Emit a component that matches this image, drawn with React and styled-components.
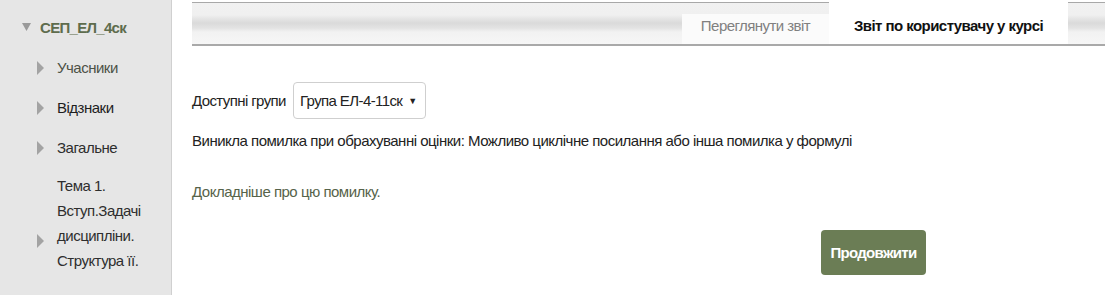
import React from 'react';
import styled, { createGlobalStyle } from 'styled-components';

const Global = createGlobalStyle`
  html, body { margin: 0; padding: 0; background: #fff; }
  body { font-family: "Liberation Sans", Arial, sans-serif; overflow: hidden; }
`;

const Page = styled.div`
  display: flex;
  width: 1105px;
  height: 295px;
  overflow: hidden;
`;

const Sidebar = styled.nav`
  flex: none;
  width: 172px;
  box-sizing: border-box;
  background: #e6e6e6;
  border-right: 1px solid #d0d0d0;
  padding-top: 17px;
`;

const CourseRow = styled.div`
  display: flex;
  align-items: center;
  height: 20px;
  padding-left: 22px;
  gap: 9px;
  font-size: 15px;
  font-weight: bold;
  letter-spacing: -0.7px;
  color: #5e6c4d;
`;

const ItemList = styled.ul`
  list-style: none;
  margin: 11px 0 0;
  padding: 0;
`;

const Item = styled.li`
  display: flex;
  align-items: ${p => (p.$multi ? 'flex-start' : 'center')};
  min-height: 40px;
  padding-left: 37px;
  padding-right: 8px;
  margin-top: ${p => (p.$multi ? '5px' : '0')};
  font-size: 15px;
  letter-spacing: -0.5px;
  line-height: ${p => (p.$multi ? '25px' : '20px')};
  color: ${p => p.$color || '#333'};
`;

const ArrowBox = styled.span`
  flex: none;
  display: flex;
  width: 7px;
  margin-right: 13px;
  margin-top: ${p => p.$offset || 0}px;
`;

const ItemText = styled.span`
  flex: 1;
`;

const Main = styled.main`
  flex: 1;
  min-width: 0;
  padding-left: 20px;
  display: flex;
  flex-direction: column;
`;

const TabBar = styled.div`
  display: flex;
  justify-content: flex-end;
  align-items: flex-end;
  height: 44px;
  padding-right: 37px;
  border-bottom: 2px solid #a9a9a9;
  background: linear-gradient(
    to bottom,
    #fff 0px,
    #fff 2px,
    #a8a8a8 2px,
    #a8a8a8 3px,
    #f1f1f1 3px,
    #f0f0f0 15px,
    #e4e4e4 19px,
    #dadada 23px,
    #e3e3e3 28px,
    #f2f2f2 32px,
    #f6f6f6 44px
  );
`;

const Tab = styled.div`
  display: flex;
  align-items: flex-end;
  justify-content: center;
  box-sizing: border-box;
  width: ${p => p.$width}px;
  height: ${p => (p.$active ? 44 : 30)}px;
  padding-bottom: 9px;
  background: ${p => (p.$active ? '#fff' : '#fbfbfb')};
  font-size: 15px;
  letter-spacing: -0.55px;
  line-height: 18px;
  font-weight: ${p => (p.$active ? 'bold' : 'normal')};
  color: ${p => (p.$active ? '#111' : '#808080')};
`;

const GroupRow = styled.div`
  display: flex;
  align-items: center;
  gap: 7px;
  margin-top: 36px;
  font-size: 15px;
  letter-spacing: -0.6px;
  color: #222;
`;

const SelectBox = styled.div`
  display: flex;
  align-items: center;
  gap: 6px;
  box-sizing: border-box;
  height: 37px;
  padding: 0 8px 0 6px;
  border: 1px solid #cfcfcf;
  border-radius: 4px;
  background: #fff;
  color: #222;
`;

const Caret = styled.span`
  font-size: 9px;
  letter-spacing: 0;
  color: #222;
`;

const ErrorText = styled.p`
  margin: 12px 0 0;
  font-size: 15px;
  line-height: 20px;
  letter-spacing: -0.5px;
  color: #222;
`;

const MoreLink = styled.a`
  display: block;
  margin-top: 31px;
  font-size: 15px;
  line-height: 20px;
  letter-spacing: -0.5px;
  color: #56634a;
  text-decoration: none;
`;

const ButtonRow = styled.div`
  display: flex;
  margin-top: 28px;
  padding-left: 629px;
`;

const Button = styled.button`
  width: 105px;
  height: 45px;
  border: none;
  border-radius: 4px;
  background: #6b7d55;
  color: #fff;
  font-family: inherit;
  font-size: 15px;
  font-weight: bold;
  letter-spacing: -0.7px;
  cursor: pointer;
`;

const DownTriangle = () => (
  <svg width="9" height="8" viewBox="0 0 9 8">
    <path d="M0 0 H9 L4.5 8 Z" fill="#9a9a9a" />
  </svg>
);

const RightTriangle = () => (
  <svg width="7" height="14" viewBox="0 0 7 14">
    <path d="M0 0 L7 7 L0 14 Z" fill="#a3a3a3" />
  </svg>
);

const items = [
  { label: 'Учасники', color: '#4d5246' },
  { label: 'Відзнаки', color: '#1e1e1e' },
  { label: 'Загальне', color: '#2e2e2e' },
];

export default function App() {
  return (
    <>
      <Global />
      <Page>
        <Sidebar>
          <CourseRow>
            <DownTriangle />
            <span>СЕП_ЕЛ_4ск</span>
          </CourseRow>
          <ItemList>
            {items.map(it => (
              <Item key={it.label} $color={it.color}>
                <ArrowBox>
                  <RightTriangle />
                </ArrowBox>
                <ItemText>{it.label}</ItemText>
              </Item>
            ))}
            <Item $multi $color="#2e2e2e">
              <ArrowBox $offset={61}>
                <RightTriangle />
              </ArrowBox>
              <ItemText>Тема 1. Вступ.Задачі дисципліни. Структура її.</ItemText>
            </Item>
          </ItemList>
        </Sidebar>
        <Main>
          <TabBar>
            <Tab $width={147}>Переглянути звіт</Tab>
            <Tab $width={239} $active>Звіт по користувачу у курсі</Tab>
          </TabBar>
          <GroupRow>
            <span>Доступні групи</span>
            <SelectBox>
              <span>Група ЕЛ-4-11ск</span>
              <Caret>▼</Caret>
            </SelectBox>
          </GroupRow>
          <ErrorText>
            Виникла помилка при обрахуванні оцінки: Можливо циклічне посилання або інша помилка у формулі
          </ErrorText>
          <MoreLink href="#">Докладніше про цю помилку.</MoreLink>
          <ButtonRow>
            <Button>Продовжити</Button>
          </ButtonRow>
        </Main>
      </Page>
    </>
  );
}
